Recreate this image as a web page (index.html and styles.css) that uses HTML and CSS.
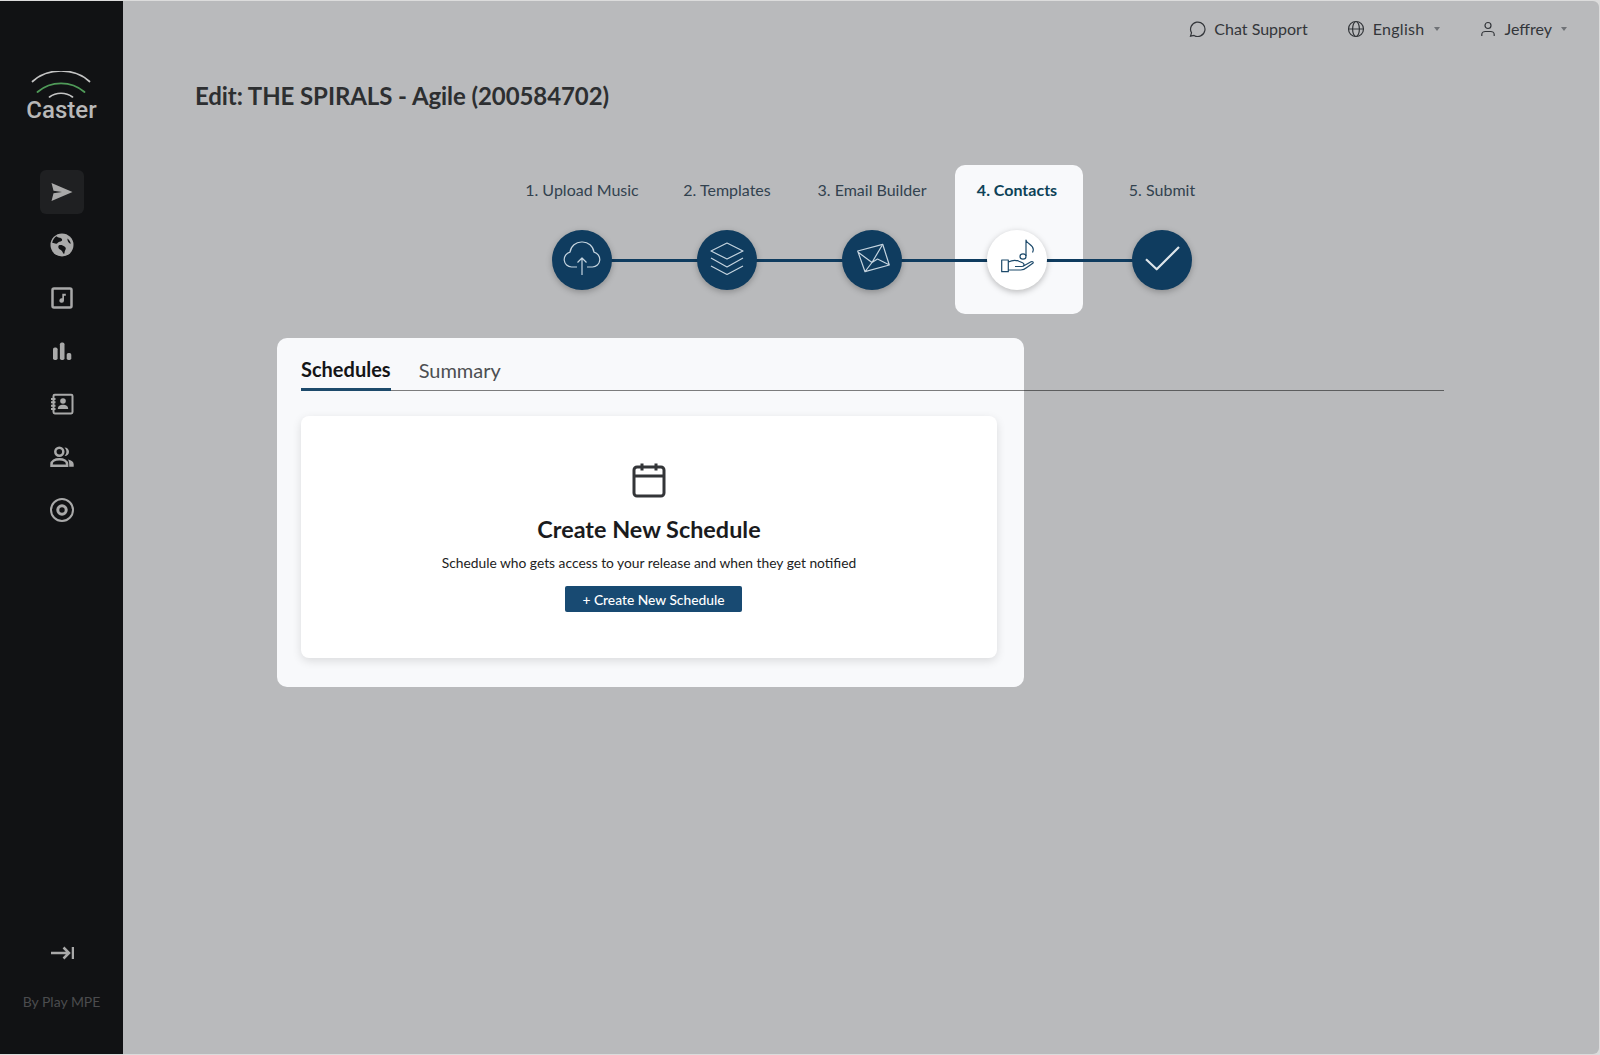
FILE: index.html
```html
<!DOCTYPE html>
<html lang="en">
<head>
  <meta charset="UTF-8" />
  <meta name="viewport" content="width=device-width, initial-scale=1.0"/>
  <title>Edit Release - Caster</title>
  <link rel="stylesheet" href="styles.css">
</head>
<body>
  <div class="shell">
    <aside class="sidebar">
      <div class="logo">
        <svg class="logo-arcs" viewBox="0 0 60 27" width="60" height="27" fill="none" stroke-linecap="round">
          <path d="M1.5 10.500C17 -3.500 43 -3.500 58.500 10.500" stroke="#c4c4c4" stroke-width="1.7"/>
          <path d="M6.500 21C20 9.500 40 9.500 53.500 21" stroke="#4f9a58" stroke-width="1.9"/>
          <path d="M18.500 26C25 21 35 21 41.500 26" stroke="#c4c4c4" stroke-width="1.6"/>
        </svg>
        <div class="logo-name">Caster</div>
      </div>
      <nav class="side-nav">
        <a class="side-link active">
          <svg viewBox="0 0 24 24" width="24" height="24"><path class="fill" d="M1.500 3 22.500 12 1.500 21 3.500 13.300 12 12 3.500 10.700z"/></svg>
        </a>
        <a class="side-link">
          <svg viewBox="0 0 24 24" width="24" height="24"><circle class="fill" cx="12" cy="12" r="11.500"/><path class="cut" d="M6.500 3.300C8 5 11 4.300 12 6.200c.8 1.500-1.200 2.300-2.600 2.600-1.600.4-1.700 2-3.300 1.900-1.500-.1-2.500-1.200-4-1C3 6.500 4.500 4.500 6.500 3.300zM9 12.200c2-.7 4 .2 5.500 1.200 1.300.9 1.800 2.200.8 3.500-.9 1.200-.4 3-1.300 4.200-1.300-.8-1.500-2.500-2.600-3.500-1.100-1-2.800-1.500-3-3-.1-.9-.2-1.900.6-2.400zM17.500 5.500c1.500 1.200 3 3.200 3.300 5.200-1.300-.2-2.500-1.400-3-2.700-.3-.8-.5-1.700-.3-2.500z"/></svg>
        </a>
        <a class="side-link">
          <svg viewBox="0 0 24 24" width="24" height="24"><rect class="line thick" x="2.500" y="2.500" width="19" height="19" rx="1.500"/><path class="fill" d="M12.300 7.800h3.500v2h-1.800v4.700a2.300 2.300 0 1 1-1.700-2.200z"/></svg>
        </a>
        <a class="side-link">
          <svg viewBox="0 0 24 24" width="24" height="24"><rect class="fill" x="3" y="8.500" width="4.600" height="12.500" rx="1.800"/><rect class="fill" x="9.900" y="3.500" width="4.600" height="17.500" rx="1.800"/><rect class="fill" x="16.700" y="14" width="4.600" height="7" rx="1.800"/></svg>
        </a>
        <a class="side-link">
          <svg viewBox="0 0 24 24" width="24" height="24"><rect class="line" x="3.500" y="2.800" width="19" height="18.600" rx="1.300"/><path class="line" d="M1 7h4.500M1 10.300h4.500M1 13.700h4.500M1 17h4.500"/><circle class="fill" cx="13" cy="9" r="2.800"/><path class="fill" d="M7.800 17c0-3 2.500-4.300 5.200-4.300s5.200 1.300 5.200 4.300z"/></svg>
        </a>
        <a class="side-link">
          <svg viewBox="0 0 24 24" width="24" height="24"><circle class="line thick" cx="9.300" cy="6.800" r="4"/><path class="line thick" d="M1.500 20.800v-1.500c0-3.300 3.500-5 7.800-5s7.800 1.700 7.800 5v1.500z"/><path class="fill" d="M14.500 2.500c2.800 0 4.500 2 4.500 4.300s-1.700 4.300-4.500 4.300c1.200-1.200 1.900-2.700 1.900-4.300s-.7-3.100-1.900-4.300zM18 14.500c3.500.6 5.700 2.300 5.700 4.800v2.400h-4.500v-2.500c0-1.900-.4-3.300-1.200-4.700z"/></svg>
        </a>
        <a class="side-link">
          <svg viewBox="0 0 24 24" width="24" height="24"><circle class="line" cx="12" cy="12" r="11"/><circle class="ring" cx="12" cy="12" r="4.200"/></svg>
        </a>
      </nav>
      <div class="side-foot">
        <a class="collapse">
          <svg viewBox="0 0 24 24" width="24" height="24"><path class="line thick" d="M1 12h18M13.500 6.500 19 12l-5.500 5.500M23 6v12"/></svg>
        </a>
        <div class="by-line">By Play MPE</div>
      </div>
    </aside>

    <main class="main">
      <header class="topbar">
        <a class="top-item">
          <svg viewBox="0 0 18 18" width="18" height="18"><path d="M2.500 16.200l1-3.400A7.200 7.200 0 1 1 6 15.400z"/></svg>
          Chat Support
        </a>
        <a class="top-item lang">
          <svg viewBox="0 0 18 18" width="18" height="18"><circle cx="9" cy="9" r="7.500"/><ellipse cx="9" cy="9" rx="3.400" ry="7.500"/><path d="M1.500 9h15"/></svg>
          English <span class="caret"></span>
        </a>
        <a class="top-item">
          <svg viewBox="0 0 18 18" width="18" height="18"><circle cx="9" cy="5.500" r="3"/><path d="M2.800 16v-1.500c0-2 2-3 3.500-3h5.400c1.500 0 3.500 1 3.500 3V16"/></svg>
          Jeffrey <span class="caret"></span>
        </a>
      </header>

      <h1 class="page-title">Edit: THE SPIRALS - Agile (200584702)</h1>

      <section class="stepper">
        <div class="step-line"></div>
        <div class="step">
          <div class="step-label">1. Upload Music</div>
          <div class="step-dot">
            <svg viewBox="0 0 60 60" width="60" height="60"><path d="M25 37h-5.500a7.500 7.500 0 0 1-1.500-14.800A11.500 11.500 0 0 1 30 12a11.500 11.500 0 0 1 12 10.200A7.500 7.500 0 0 1 40.500 37H35M30 45V28M25.500 32.500 30 28l4.500 4.500"/></svg>
          </div>
        </div>
        <div class="step">
          <div class="step-label">2. Templates</div>
          <div class="step-dot">
            <svg viewBox="0 0 60 60" width="60" height="60"><path d="M30 13 46 21 30 29 14 21zM14 28l16 9 16-9M14 36l16 8.500L46 36"/></svg>
          </div>
        </div>
        <div class="step">
          <div class="step-label">3. Email Builder</div>
          <div class="step-dot">
            <svg viewBox="0 0 60 60" width="60" height="60"><path d="M15.700 21 40.700 14.300 47.300 35 23 41.700zM16.500 22.500 30 32.500 40 15.500M23.500 41 30 32.500 35.500 29 46.500 34.500"/></svg>
          </div>
        </div>
        <div class="step active">
          <div class="step-label">4. Contacts</div>
          <div class="step-dot">
            <svg viewBox="0 0 60 60" width="60" height="60"><path d="M14.700 30h6.600v11.700h-6.600zM21.300 32c4-2 7.500-2.200 10.700-.7l3.500 1.500c2.300 1 1.800 3.700-.8 3.700H28M21.300 40h12.500c2.500 0 4-.8 6-2.500l6-4.200c1.200-1-.3-2.300-1.800-1.500l-7.500 4.200M39 26V10c.5 4 7.300 4.500 7.300 9.500 0 1-.3 2-.8 3"/><ellipse cx="36" cy="26.500" rx="3" ry="2.600"/></svg>
          </div>
        </div>
        <div class="step">
          <div class="step-label">5. Submit</div>
          <div class="step-dot check">
            <svg viewBox="0 0 60 60" width="60" height="60"><path d="M14 29.300 24.700 39.300 47 17"/></svg>
          </div>
        </div>
      </section>

      <section class="panel">
        <div class="tabs">
          <a class="tab active">Schedules</a>
          <a class="tab">Summary</a>
        </div>
        <div class="empty-card">
          <svg class="cal-icon" viewBox="0 0 34 36" width="34" height="36"><rect x="2" y="5" width="30" height="29" rx="3"/><path d="M2 14h30M10 1.500v7M24 1.500v7"/></svg>
          <h2>Create New Schedule</h2>
          <p>Schedule who gets access to your release and when they get notified</p>
          <button class="create-btn">+ Create New Schedule</button>
        </div>
      </section>
    </main>
  </div>
</body>
</html>
```

FILE: styles.css
```css
:root {
  --page: #b9babc;
  --side: #111214;
  --side-icon: #a9a9a9;
  --navy: #0f3c5f;
  --panel: #f8f9fb;
}

* {
  box-sizing: border-box;
}

body {
  margin: 0;
  background: #dcdcdc;
  font-family: Lato, "Noto Sans", sans-serif;
  color: #2d2f31;
}

.shell {
  display: flex;
  height: 1053px;
  margin: 1px 1px 1px 0;
  background: var(--page);
  border-radius: 0 6px 6px 0;
  overflow: hidden;
}

/* sidebar */
.sidebar {
  width: 123px;
  flex: none;
  background: var(--side);
  display: flex;
  flex-direction: column;
  align-items: center;
  padding: 70px 0 42px;
}

.logo {
  display: flex;
  flex-direction: column;
  align-items: center;
}

.logo-arcs {
  display: block;
}

.logo-name {
  font-family: Roboto, sans-serif;
  font-size: 24px;
  font-weight: 500;
  line-height: 24px;
  color: #b8b8b8;
}

.side-nav {
  display: flex;
  flex-direction: column;
  gap: 9px;
  margin-top: 48px;
}

.side-link {
  width: 44px;
  height: 44px;
  display: flex;
  align-items: center;
  justify-content: center;
  border-radius: 6px;
}

.side-link.active {
  background: #1f2022;
}

.sidebar .fill {
  fill: var(--side-icon);
}

.sidebar .cut {
  fill: var(--side);
}

.sidebar .line {
  fill: none;
  stroke: var(--side-icon);
  stroke-width: 2;
}

.sidebar .line.thick {
  stroke-width: 2.5;
}

.sidebar .ring {
  fill: none;
  stroke: var(--side-icon);
  stroke-width: 3;
}

.side-foot {
  margin-top: auto;
  display: flex;
  flex-direction: column;
  align-items: center;
}

.collapse {
  height: 24px;
  margin-bottom: 27px;
}

.by-line {
  font-size: 14px;
  line-height: 20px;
  color: #4b4c4e;
}

/* main column */
.main {
  flex: 1;
  min-width: 0;
  padding-left: 72px;
}

.topbar {
  height: 55px;
  display: flex;
  justify-content: flex-end;
  align-items: center;
  gap: 39px;
  padding-right: 32px;
}

.top-item {
  display: flex;
  align-items: center;
  gap: 8px;
  font-size: 16px;
  color: #33363a;
}

.top-item.lang {
  letter-spacing: 0.3px;
}

.top-item svg {
  fill: none;
  stroke: #33363a;
  stroke-width: 1.2;
}

.caret {
  width: 0;
  height: 0;
  margin-left: 1px;
  border-left: 3px solid transparent;
  border-right: 3px solid transparent;
  border-top: 4px solid #6f7276;
}

.page-title {
  margin: 24px 0 0;
  font-size: 24px;
  line-height: 32px;
  font-weight: 700;
  letter-spacing: -0.08px;
}

/* stepper */
.stepper {
  position: relative;
  display: flex;
  gap: 17px;
  width: 708px;
  margin: 53px 0 0 323px;
}

.step-line {
  position: absolute;
  z-index: 1;
  left: 64px;
  right: 64px;
  top: 94px;
  height: 3px;
  background: var(--navy);
}

.step {
  width: 128px;
  height: 149px;
  flex: none;
  padding-top: 15px;
  display: flex;
  flex-direction: column;
  align-items: center;
  border-radius: 10px;
}

.step.active {
  margin: 0 -2px 0 2px;
  padding-right: 4px;
  background: var(--panel);
}

.step-label {
  font-size: 16px;
  line-height: 20px;
  color: #32424f;
  white-space: nowrap;
}

.step.active .step-label {
  font-weight: 700;
  color: #0d4257;
}

.step-dot {
  position: relative;
  z-index: 2;
  width: 60px;
  height: 60px;
  margin-top: 30px;
  border-radius: 50%;
  background: var(--navy);
  box-shadow: 0 2px 6px rgba(0, 0, 0, 0.25);
}

.step-dot svg {
  display: block;
  fill: none;
  stroke: #c5d4df;
  stroke-width: 1.2;
  stroke-linejoin: round;
}

.step.active .step-dot {
  background: #fff;
}

.step.active .step-dot svg {
  stroke: #1d4a6b;
}

.step-dot.check svg {
  stroke: #dde5ea;
  stroke-width: 2.2;
}

/* schedules panel */
.panel {
  width: 747px;
  height: 349px;
  margin: 24px 0 0 82px;
  padding: 0 27px 0 24px;
  background: var(--panel);
  border-radius: 10px;
}

.tabs {
  width: 1143px;
  height: 53px;
  display: flex;
  align-items: flex-end;
  gap: 28px;
  border-bottom: 1px solid rgba(0, 0, 0, 0.5);
}

.tab {
  font-size: 20px;
  padding-bottom: 8px;
  color: #4d4f52;
}

.tab.active {
  font-weight: 700;
  color: #141517;
  padding-bottom: 7px;
  margin-bottom: -1px;
  border-bottom: 3px solid #1d4a6b;
}

.empty-card {
  height: 242px;
  margin-top: 25px;
  padding-top: 46px;
  display: flex;
  flex-direction: column;
  align-items: center;
  background: #fff;
  border-radius: 8px;
  box-shadow: 0 3px 10px rgba(0, 0, 0, 0.12);
}

.cal-icon {
  display: block;
  fill: none;
  stroke: #333538;
  stroke-width: 3;
}

.empty-card h2 {
  margin: 16px 0 0;
  font-size: 23.4px;
  line-height: 30px;
  font-weight: 700;
  color: #1a1b1d;
}

.empty-card p {
  margin: 9px 0 0;
  font-size: 13.8px;
  line-height: 20px;
  color: #222;
}

.create-btn {
  width: 177px;
  height: 26px;
  margin: 13px 0 0 9px;
  border: none;
  border-radius: 2px;
  background: #184a72;
  color: #fff;
  font: 500 13.8px Lato, "Noto Sans", sans-serif;
}
```
